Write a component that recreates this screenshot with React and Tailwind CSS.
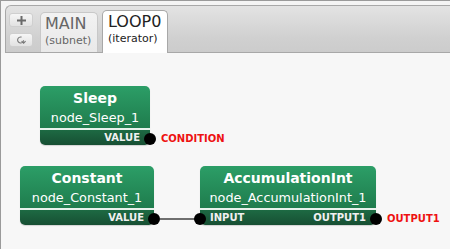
import React from "react";

function Port({ className }) {
  return <div className={"absolute w-[12px] h-[12px] rounded-full bg-black " + className} />;
}

function Node({ left, top, width, title, sub, leftLabel, rightLabel, leftPort, rightPort, outLabel }) {
  return (
    <div className="absolute" style={{ left, top, width }}>
      <div className="rounded-[5px] overflow-hidden flex flex-col shadow-[0_1px_1px_rgba(0,0,0,0.15)]">
        <div className="h-[42px] bg-gradient-to-b from-[#2c9e67] to-[#1f7c4d] flex flex-col items-center text-white">
          <div className="pt-[4px] text-[14px] leading-[16px] font-bold">{title}</div>
          <div className="mt-[4px] text-[12.8px] leading-[16px]">{sub}</div>
        </div>
        <div className="h-[2px] bg-[#e8f2ec]" />
        <div className="h-[15px] bg-gradient-to-b from-[#1d6a43] to-[#174f33] flex items-center justify-between px-[10px] text-[10px] font-bold text-[#f0f0f0] leading-[15px]">
          <span>{leftLabel}</span>
          <span>{rightLabel}</span>
        </div>
      </div>
      {leftPort && <Port className="left-[-6px] top-[47px]" />}
      {rightPort && <Port className="right-[-6px] top-[47px]" />}
      {outLabel && (
        <div className="absolute top-[45px] text-[10px] font-bold text-[#ee1111] leading-[15px]" style={{ left: width + 11 }}>
          {outLabel}
        </div>
      )}
    </div>
  );
}

export default function App() {
  return (
    <div className="w-[450px] h-[249px] overflow-hidden bg-[#f7f7f7] border-l border-t border-[#9a9a9a] flex flex-col font-['DejaVu_Sans',sans-serif]">
      <div className="bg-[#f4f4f4] pt-[4px] pl-[4px]">
        <div className="h-[48px] border border-r-0 border-[#a8a8a8] rounded-tl-[6px] bg-gradient-to-b from-[#e3e3e3] via-[#d0d0d0] via-70% to-[#cccccc] flex items-end">
          <div className="self-start mt-[7px] ml-[3px] flex flex-col gap-[6px]">
            <div className="w-[24px] h-[14px] rounded-[3px] border border-[#cfcfcf] bg-gradient-to-b from-[#f6f6f6] to-[#e2e2e2] flex items-center justify-center">
              <svg width="9" height="9" viewBox="0 0 9 9">
                <path d="M3.5 0h2v3.5h3.5v2h-3.5v3.5h-2v-3.5h-3.5v-2h3.5z" fill="#6a6a6a" />
              </svg>
            </div>
            <div className="w-[24px] h-[14px] rounded-[3px] border border-[#cfcfcf] bg-gradient-to-b from-[#f6f6f6] to-[#e2e2e2] flex items-center justify-center">
              <svg width="10" height="10" viewBox="0 0 10 10" fill="none">
                <path d="M7.6 5.2A3 3 0 1 1 5.5 2.1" stroke="#777" strokeWidth="1.1" />
                <path d="M5.6 6.2l2 2 2-2" stroke="#777" strokeWidth="1.1" />
              </svg>
            </div>
          </div>
          <div className="ml-[7px] w-[58px] h-[40px] rounded-t-[5px] border border-b-0 border-[#c8c8c8] bg-gradient-to-b from-[#f2f2f2] to-[#e9e9e9] pl-[4px] pt-[1px] text-[#666]">
            <div className="text-[16px] leading-[19px]">MAIN</div>
            <div className="text-[11px] leading-[14px] mt-[1px]">(subnet)</div>
          </div>
          <div className="ml-[4px] w-[66px] h-[43px] mb-[-1px] rounded-t-[5px] border border-b-0 border-[#a8a8a8] bg-white pl-[5px] pt-[1px] text-[#222]">
            <div className="text-[16px] leading-[19px]">LOOP0</div>
            <div className="text-[11px] leading-[14px] mt-[1px]">(iterator)</div>
          </div>
        </div>
      </div>
      <div className="relative flex-1">
        <div className="absolute left-[159px] w-[36px] h-[2px] bg-[#6f6f6f]" style={{ top: 165 }} />
        <Node left={39} top={33} width={110} title="Sleep" sub="node_Sleep_1" leftLabel="" rightLabel="VALUE" rightPort outLabel="CONDITION" />
        <Node left={19} top={113} width={134} title="Constant" sub="node_Constant_1" leftLabel="" rightLabel="VALUE" rightPort />
        <Node left={199} top={113} width={176} title="AccumulationInt" sub="node_AccumulationInt_1" leftLabel="INPUT" rightLabel="OUTPUT1" leftPort rightPort outLabel="OUTPUT1" />
      </div>
    </div>
  );
}
